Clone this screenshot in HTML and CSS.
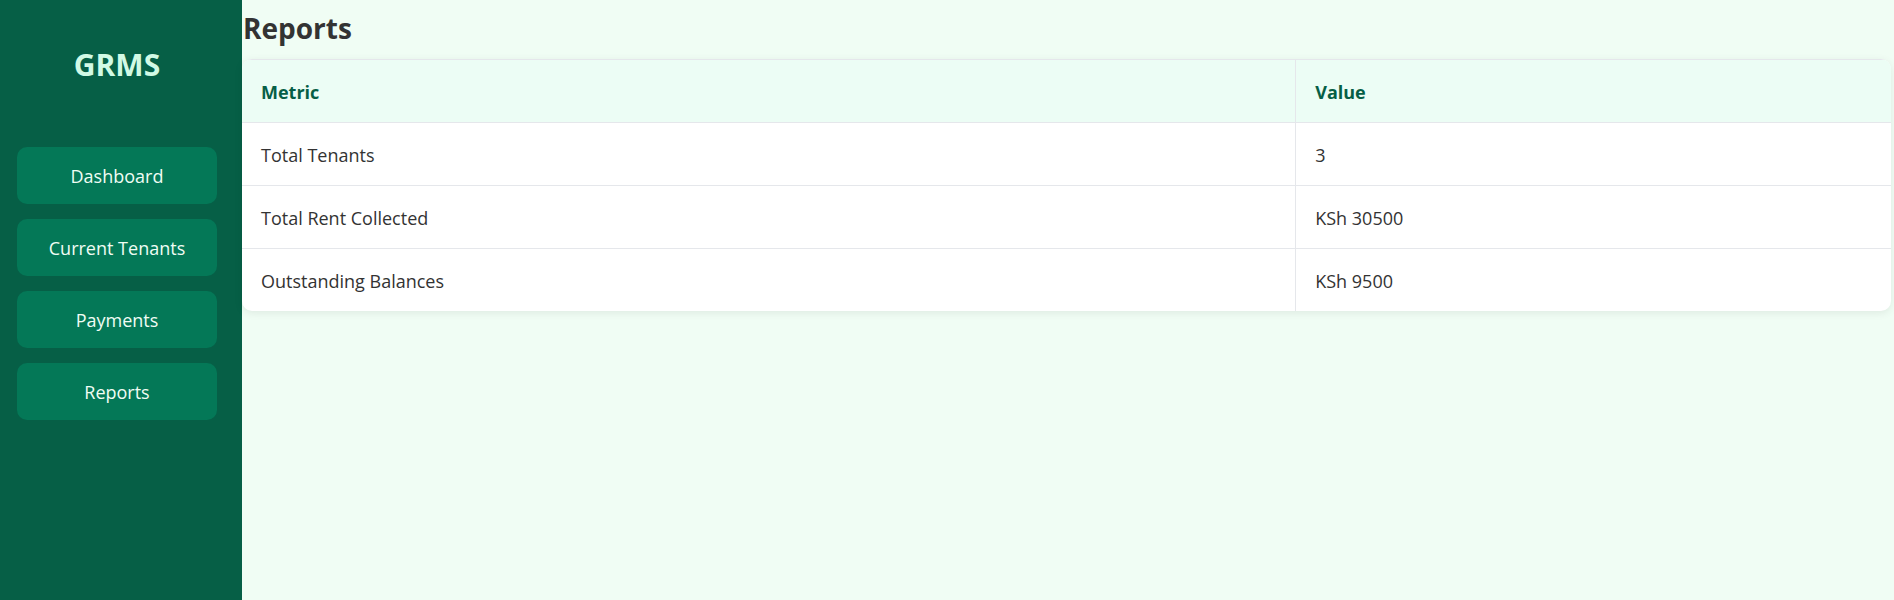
FILE: index.html
```html
<!DOCTYPE html>
<html lang="en">
<head>
<meta charset="utf-8">
<title>GRMS - Reports</title>
<link rel="stylesheet" href="styles.css">
</head>
<body>
<div class="layout">
  <aside class="sidebar">
    <h1 class="brand">GRMS</h1>
    <nav class="nav">
      <a class="nav-item" href="#">Dashboard</a>
      <a class="nav-item" href="#">Current Tenants</a>
      <a class="nav-item" href="#">Payments</a>
      <a class="nav-item" href="#">Reports</a>
    </nav>
  </aside>
  <main class="main">
    <h2 class="page-title">Reports</h2>
    <div class="card">
      <table class="report-table">
        <thead>
          <tr><th class="col-metric">Metric</th><th>Value</th></tr>
        </thead>
        <tbody>
          <tr><td>Total Tenants</td><td>3</td></tr>
          <tr><td>Total Rent Collected</td><td>KSh 30500</td></tr>
          <tr><td>Outstanding Balances</td><td>KSh 9500</td></tr>
        </tbody>
      </table>
    </div>
  </main>
</div>
</body>
</html>
```

FILE: styles.css
```css
* { box-sizing: border-box; }
html, body { margin: 0; padding: 0; height: 100%; }
body {
  font-family: "Open Sans", "Noto Sans", sans-serif;
  background: #f0fdf4;
  color: #333333;
}
.layout {
  display: flex;
  min-height: 100vh;
}
.sidebar {
  width: 242px;
  flex: 0 0 242px;
  background: #065f46;
  padding: 45px 25px 0 17px;
  display: flex;
  flex-direction: column;
}
.brand {
  margin: 0;
  font-size: 30px;
  line-height: 40px;
  font-weight: 700;
  color: #d1fae5;
  text-align: center;
}
.nav {
  margin-top: 62px;
  display: flex;
  flex-direction: column;
  gap: 15px;
}
.nav-item {
  display: flex;
  align-items: center;
  justify-content: center;
  height: 57px;
  background: #047857;
  border-radius: 10px;
  color: #f0fdf4;
  text-decoration: none;
  font-size: 18px;
}
.main {
  flex: 1;
  padding: 0 3px 0 0;
  display: flex;
  flex-direction: column;
}
.page-title {
  margin: 11px 0 13px 1px;
  font-size: 28px;
  line-height: 35px;
  font-weight: 700;
  color: #333333;
}
.card {
  background: #ffffff;
  border-radius: 10px;
  box-shadow: 0 2px 8px rgba(0, 0, 0, 0.08);
  overflow: hidden;
}
.report-table {
  width: 100%;
  border-collapse: collapse;
  font-size: 18px;
}
.report-table th,
.report-table td {
  text-align: left;
  padding: 20px 19px 18px;
  line-height: 24px;
  border-bottom: 1px solid #e5e7eb;
}
.report-table th + th,
.report-table td + td {
  border-left: 1px solid #e5e7eb;
}
.report-table tbody tr:last-child td { border-bottom: none; }
.report-table thead th {
  background: #ecfdf5;
  color: #065f46;
  font-weight: 700;
  border-top: 1px solid #e5e7eb;
}
.col-metric { width: 63.9%; }
```
